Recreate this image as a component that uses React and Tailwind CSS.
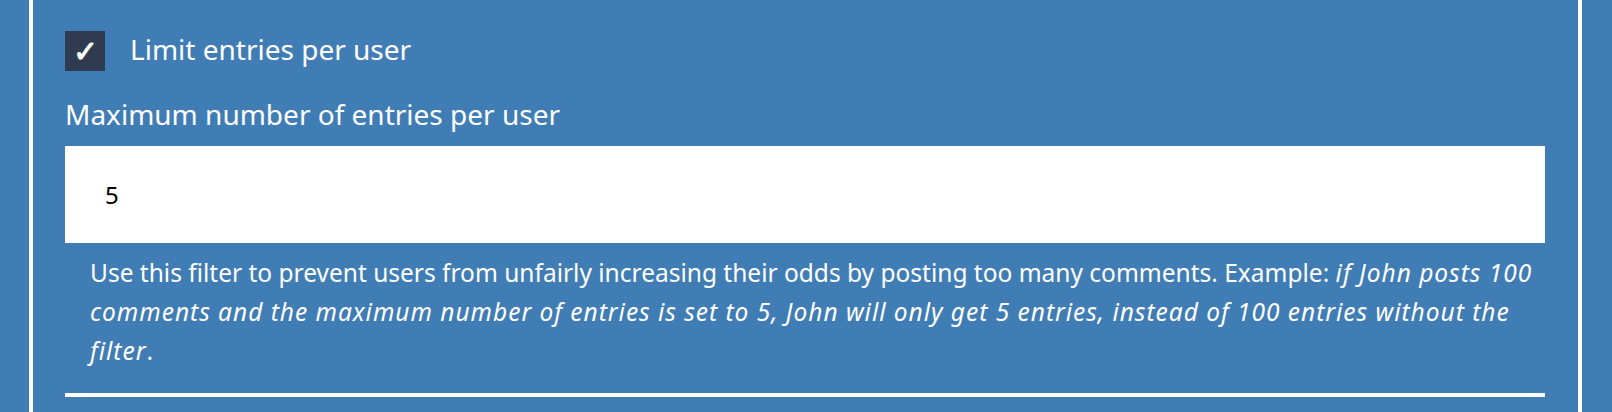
export default function App() {
  return (
    <div
      className="h-[412px] w-full overflow-hidden bg-[#417db5] text-white"
      style={{ fontFamily: '"Noto Sans", "Open Sans", sans-serif' }}
    >
      <div className="ml-[29px] mr-[30px] h-full border-x-4 border-white pl-8 pr-[33px] pt-[31px]">
        <label className="flex items-center">
          <span className="flex h-10 w-10 items-center justify-center bg-[#2f3b50] text-[30px] font-semibold leading-none text-white">
            ✓
          </span>
          <span className="ml-[25px] -mt-1 text-[28px] leading-9">Limit entries per user</span>
        </label>

        <div className="mt-[25px] text-[28px] leading-9">Maximum number of entries per user</div>

        <div className="mt-[14px] flex h-[97px] items-center bg-white pl-[40px] text-[24px] text-black">
          5
        </div>

        <p className="mt-[10px] pl-[25px] text-[24.5px] leading-[39px]">
          Use this filter to prevent users from unfairly increasing their odds by posting too many
          comments. Example:{" "}
          <em className="tracking-[0.04em]">
            if John posts 100 comments and the maximum number of entries is set to 5, John will
            only get 5 entries, instead of 100 entries without the filter
          </em>
          .
        </p>

        <div className="mt-[23px] h-1 bg-white" />
      </div>
    </div>
  );
}
